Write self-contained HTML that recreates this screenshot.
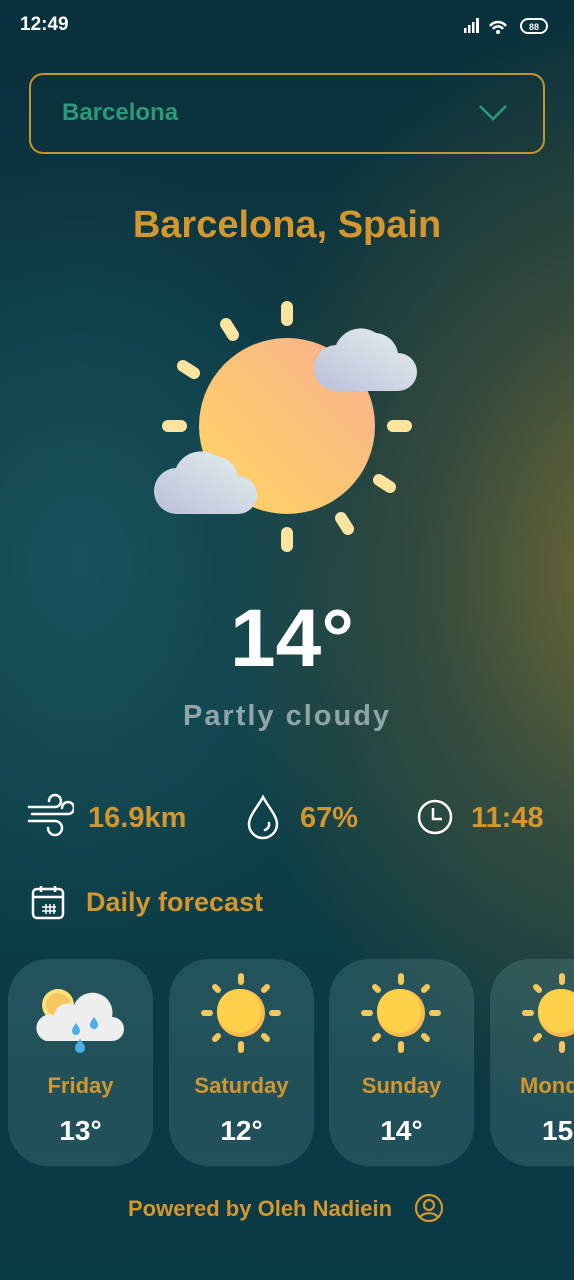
<!DOCTYPE html>
<html><head><meta charset="utf-8"><style>
*{margin:0;padding:0;box-sizing:border-box}
body{width:574px;height:1280px;overflow:hidden;font-family:"Liberation Sans",sans-serif;position:relative;
background:
radial-gradient(ellipse 420px 560px at 640px 570px, rgba(120,108,50,0.95), rgba(85,88,55,0.55) 50%, rgba(0,0,0,0) 100%),
radial-gradient(ellipse 300px 400px at 80px 560px, rgba(25,85,95,0.9), rgba(0,0,0,0) 100%),
linear-gradient(180deg,#0a313b 0%,#0d3b45 40%,#0e4048 60%,#0b3843 85%,#0b3a47 100%);}
.abs{position:absolute}
.gold{color:#d4962e}
.wrap{position:absolute;left:0;top:950px;width:574px;height:230px;overflow:hidden}
.card{position:absolute;top:9px;width:145px;height:207px;border-radius:40px;background:rgba(120,170,170,0.22)}
.card .d{position:absolute;top:114px;width:100%;text-align:center;font-size:22px;font-weight:bold;color:#d4962e}
.card .t{position:absolute;top:156px;width:100%;text-align:center;font-size:28px;font-weight:bold;color:#fff}
</style></head><body>
<div class="abs" style="left:20px;top:14px;color:#fff;font-weight:bold;font-size:19px">12:49</div>
<svg class="abs" style="left:462px;top:16px" width="90" height="22" viewBox="0 0 90 22">
<g fill="#fff"><rect x="2" y="12" width="2.5" height="5"/><rect x="6" y="9" width="2.5" height="8"/><rect x="10" y="6" width="2.5" height="11"/><rect x="14" y="2" width="3" height="15"/></g>
<path d="M28 10a10 10 0 0 1 16 0M31 13a6 6 0 0 1 10 0" stroke="#fff" stroke-width="2.5" fill="none"/><circle cx="36" cy="16" r="2" fill="#fff"/>
<rect x="59" y="3" width="26" height="14" rx="7" fill="none" stroke="#fff" stroke-width="2"/><text x="72" y="14" font-size="9" font-weight="bold" fill="#fff" text-anchor="middle" font-family="Liberation Sans">88</text>
</svg>
<div class="abs" style="left:29px;top:73px;width:516px;height:81px;border:2.5px solid #c8922e;border-radius:14px"></div>
<div class="abs" style="left:62px;top:99px;font-size:24px;font-weight:bold;color:#2a9a78">Barcelona</div>
<svg class="abs" style="left:478px;top:102px" width="30" height="20"><path d="M2 4l13 13 13-13" stroke="#2a9a78" stroke-width="2.5" fill="none"/></svg>
<div class="abs gold" style="left:0;width:574px;text-align:center;top:204px;font-size:38px;font-weight:bold">Barcelona, Spain</div>
<svg class="abs" style="left:150px;top:295px" width="280" height="265" viewBox="150 295 280 265">
<defs><linearGradient id="sg" x1="0" y1="1" x2="1" y2="0"><stop offset="0" stop-color="#fdd661"/><stop offset="1" stop-color="#f9b08f"/></linearGradient>
<linearGradient id="cg" x1="0" y1="1" x2="1" y2="0"><stop offset="0" stop-color="#b9c0da"/><stop offset="1" stop-color="#e6f0ee"/></linearGradient></defs>
<g stroke="#fde3a0" stroke-width="12" stroke-linecap="round">
<line x1="287" y1="307" x2="287" y2="320"/><line x1="287" y1="533" x2="287" y2="546"/>
<line x1="168" y1="426" x2="181" y2="426"/><line x1="393" y1="426" x2="406" y2="426"/>
<line x1="226" y1="324" x2="233" y2="335"/><line x1="341" y1="518" x2="348" y2="529"/>
<line x1="183" y1="366" x2="194" y2="373"/><line x1="379" y1="480" x2="390" y2="487"/>
</g>
<circle cx="287" cy="426" r="88" fill="url(#sg)"/>
<path d="M338 391h60a19 19 0 0 0 0-38 24 24 0 0 0-22-20 27 27 0 0 0-40 12 23 23 0 0 0 2 46z" fill="url(#cg)"/>
<path d="M178 514h60a19 19 0 0 0 0-38 24 24 0 0 0-22-20 27 27 0 0 0-40 12 23 23 0 0 0 2 46z" fill="url(#cg)"/>
</svg>
<div class="abs" style="left:0;width:574px;text-align:center;top:592px;font-size:82px;font-weight:bold;color:#fff;padding-left:10px">14°</div>
<div class="abs" style="left:0;width:574px;text-align:center;top:700px;font-size:29px;font-weight:bold;color:#8fa5a8;letter-spacing:2px">Partly cloudy</div>
<svg class="abs" style="left:26px;top:793px" width="48" height="48" viewBox="0 0 48 48" fill="none" stroke="#fff" stroke-width="2.5" stroke-linecap="round">
<path d="M3 14h26a6 6 0 1 0-6-6"/><path d="M6 21h36a6 6 0 1 0-6-6"/><path d="M3 28h26a7 7 0 1 1-7 7"/></svg>
<div class="abs gold" style="left:88px;top:802px;font-size:29px;font-weight:bold">16.9km</div>
<svg class="abs" style="left:245px;top:794px" width="36" height="46" viewBox="0 0 36 46" fill="none" stroke="#fff" stroke-width="2.5"><path d="M18 3C12 14 4 22 4 30a14 14 0 0 0 28 0C32 22 24 14 18 3z"/><path d="M24 29a6 6 0 0 1-4 7" stroke-linecap="round"/></svg>
<div class="abs gold" style="left:300px;top:802px;font-size:29px;font-weight:bold">67%</div>
<svg class="abs" style="left:416px;top:798px" width="38" height="38" viewBox="0 0 38 38" fill="none" stroke="#fff" stroke-width="2.5"><circle cx="19" cy="19" r="16"/><path d="M17 10v11h9"/></svg>
<div class="abs gold" style="left:471px;top:802px;font-size:29px;font-weight:bold">11:48</div>
<svg class="abs" style="left:30px;top:884px" width="36" height="36" viewBox="0 0 36 36" fill="none" stroke="#fff" stroke-width="2.5"><rect x="3" y="5" width="30" height="29" rx="4"/><path d="M3 13h30M11 2v6M25 2v6"/><g stroke-width="1.5"><path d="M12 23h14M12 27h14M16 20v10M20 20v10M24 20v10"/></g></svg>
<div class="abs gold" style="left:86px;top:887px;font-size:27px;font-weight:bold">Daily forecast</div>
<svg width="0" height="0" style="position:absolute"><defs><g id="sun"><g stroke="#f4c65c" stroke-width="6" stroke-linecap="round"><line x1="40" y1="3" x2="40" y2="9"/><line x1="40" y1="71" x2="40" y2="77"/><line x1="3" y1="40" x2="9" y2="40"/><line x1="71" y1="40" x2="77" y2="40"/><line x1="14" y1="14" x2="17" y2="17"/><line x1="63" y1="63" x2="66" y2="66"/><line x1="66" y1="14" x2="63" y2="17"/><line x1="14" y1="66" x2="17" y2="63"/></g><circle cx="40" cy="40" r="24" fill="#f8b94a"/><circle cx="38" cy="38" r="22" fill="#fdd24a"/></g></defs></svg>
<div class="wrap">
<div class="card" style="left:8px"><svg class="abs" style="left:28px;top:24px" width="92" height="72" viewBox="0 0 92 72">
<circle cx="22" cy="22" r="16" fill="#fbe37a"/><circle cx="22" cy="22" r="12" fill="#f6c760"/>
<path d="M10 58h66a12 12 0 0 0 0-24 20 20 0 0 0-38-12 14 14 0 0 0-20 10 13 13 0 0 0-8 26z" fill="#eeeeee"/>
<path d="M40 40c-3 4-4 6-4 8a4 4 0 0 0 8 0c0-2-1-4-4-8zM58 34c-3 4-4 6-4 8a4 4 0 0 0 8 0c0-2-1-4-4-8zM44 56c-3 4-5 6-5 9a5 5 0 0 0 10 0c0-3-2-5-5-9z" fill="#4aaee8"/></svg>
<div class="d">Friday</div><div class="t">13°</div></div>
<div class="card" style="left:169px"><svg class="abs" style="left:32px;top:14px" width="80" height="80"><use href="#sun"/></svg><div class="d">Saturday</div><div class="t">12°</div></div>
<div class="card" style="left:329px"><svg class="abs" style="left:32px;top:14px" width="80" height="80"><use href="#sun"/></svg><div class="d">Sunday</div><div class="t">14°</div></div>
<div class="card" style="left:490px;width:84px;border-radius:40px 0 0 40px"><svg class="abs" style="left:32px;top:14px" width="52" height="80" viewBox="0 0 52 80"><use href="#sun"/></svg><div class="d" style="text-align:left;left:30px;white-space:nowrap;overflow:hidden;width:54px">Monday</div><div class="t" style="text-align:left;left:52px;width:32px;overflow:hidden;white-space:nowrap">15°</div></div>
</div>
<div class="abs gold" style="left:128px;top:1196px;font-size:22px;font-weight:bold">Powered by Oleh Nadiein</div>
<svg class="abs" style="left:414px;top:1193px" width="30" height="30" viewBox="0 0 30 30" fill="none" stroke="#d4962e" stroke-width="2.2"><circle cx="15" cy="15" r="13"/><circle cx="15" cy="12" r="5"/><path d="M6 24a11 9 0 0 1 18 0"/></svg>
</body></html>
